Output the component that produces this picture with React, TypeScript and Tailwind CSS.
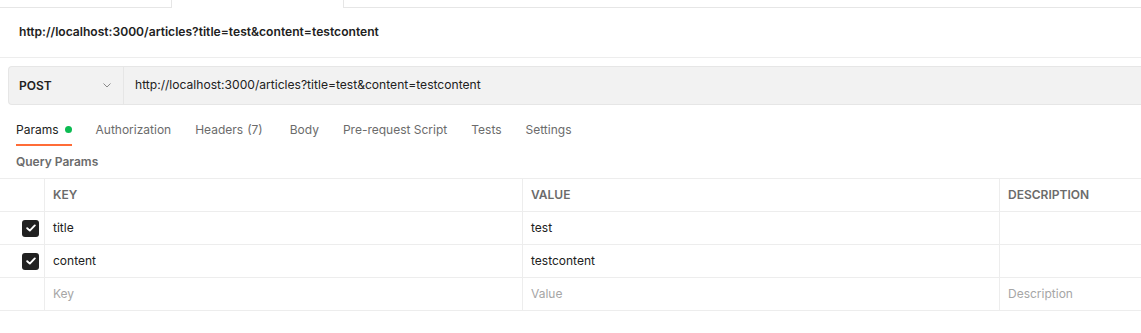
import React from 'react';

const tabs = [
  { label: 'Params', active: true, dot: true },
  { label: 'Authorization' },
  { label: 'Headers', count: '(7)' },
  { label: 'Body' },
  { label: 'Pre-request Script' },
  { label: 'Tests' },
  { label: 'Settings' },
];

const rows = [
  { key: 'title', value: 'test', checked: true },
  { key: 'content', value: 'testcontent', checked: true },
];

function Checkbox() {
  return (
    <span className="flex h-[17px] w-[17px] items-center justify-center rounded-[3px] bg-[#212121]">
      <svg width="10" height="8" viewBox="0 0 10 8" fill="none" aria-hidden="true">
        <path d="M1.2 4.2 L3.8 6.6 L8.8 1.4" stroke="#ffffff" strokeWidth="1.9" strokeLinecap="round" strokeLinejoin="round" />
      </svg>
    </span>
  );
}

function Row({
  keyCell, value, desc, checked, head, placeholder,
}: {
  keyCell: string;
  value: string;
  desc: string;
  checked?: boolean;
  head?: boolean;
  placeholder?: boolean;
}) {
  const tone = head
    ? 'text-[12px] font-semibold text-[#6b6b6b]'
    : placeholder
      ? 'text-[12px] text-[#a6a6a6]'
      : 'text-[12px] text-[#212121]';
  return (
    <div className="flex h-[33px] border-b border-[#ededed]">
      <div className="flex w-[45px] shrink-0 items-center justify-end border-r border-[#ededed] pr-[5px]">
        {checked && <Checkbox />}
      </div>
      <div className={`flex w-[478px] shrink-0 items-center border-r border-[#ededed] pl-2 ${tone}`}>{keyCell}</div>
      <div className={`flex w-[477px] shrink-0 items-center border-r border-[#ededed] pl-2 ${tone}`}>{value}</div>
      <div className={`flex flex-1 items-center pl-2 ${tone}`}>{desc}</div>
    </div>
  );
}

export default function App() {
  return (
    <div className="h-[333px] w-[1141px] overflow-hidden bg-white font-['Inter',sans-serif]">
      {/* tab strip */}
      <div className="flex h-2">
        <div className="w-[171px] border-b border-[#e6e6e6]" />
        <div className="w-[173px] border-x border-[#e6e6e6]" />
        <div className="flex-1 border-b border-[#e6e6e6]" />
      </div>

      {/* request name */}
      <div className="flex h-[50px] items-center border-b border-[#ededed] pl-[19px] text-[12.1px] font-semibold text-[#212121]">
        http://localhost:3000/articles?title=test&amp;content=testcontent
      </div>

      {/* url bar */}
      <div className="pl-2 pt-[8px]">
        <div className="flex h-[39px] rounded-l-[4px] border border-r-0 border-[#e6e6e6] bg-[#f2f2f2]">
          <div className="flex w-[115px] shrink-0 items-center justify-between border-r border-[#e6e6e6] pl-[10px] pr-[12px]">
            <span className="text-[12px] font-semibold text-[#212121]">POST</span>
            <svg width="8" height="5" viewBox="0 0 8 5" fill="none" aria-hidden="true">
              <path d="M0.5 0.5 L4 4 L7.5 0.5" stroke="#8a8a8a" strokeWidth="1" />
            </svg>
          </div>
          <div className="flex items-center pl-[11px] text-[12.1px] text-[#212121]">
            http://localhost:3000/articles?title=test&amp;content=testcontent
          </div>
        </div>
      </div>

      {/* tabs */}
      <div className="mt-[9px] flex gap-6 pl-4">
        {tabs.map((t) => (
          <div
            key={t.label}
            className={`flex h-8 items-center border-b-2 pt-px text-[12px] ${
              t.active ? 'border-[#ff6c37] text-[#212121]' : 'border-transparent text-[#6b6b6b]'
            } ${t.count ? 'mr-[3px]' : ''}`}
          >
            {t.label}
            {t.count && <span className="ml-1">{t.count}</span>}
            {t.dot && <span className="ml-[6px] h-[7px] w-[7px] rounded-full bg-[#0cbb52]" />}
          </div>
        ))}
      </div>

      <div className="flex h-8 items-center pl-4 text-[12px] font-semibold text-[#6b6b6b]">Query Params</div>

      {/* table */}
      <div className="border-t border-[#ededed]">
        <Row head keyCell="KEY" value="VALUE" desc="DESCRIPTION" />
        {rows.map((r) => (
          <Row key={r.key} keyCell={r.key} value={r.value} desc="" checked={r.checked} />
        ))}
        <Row placeholder keyCell="Key" value="Value" desc="Description" />
      </div>
    </div>
  );
}
